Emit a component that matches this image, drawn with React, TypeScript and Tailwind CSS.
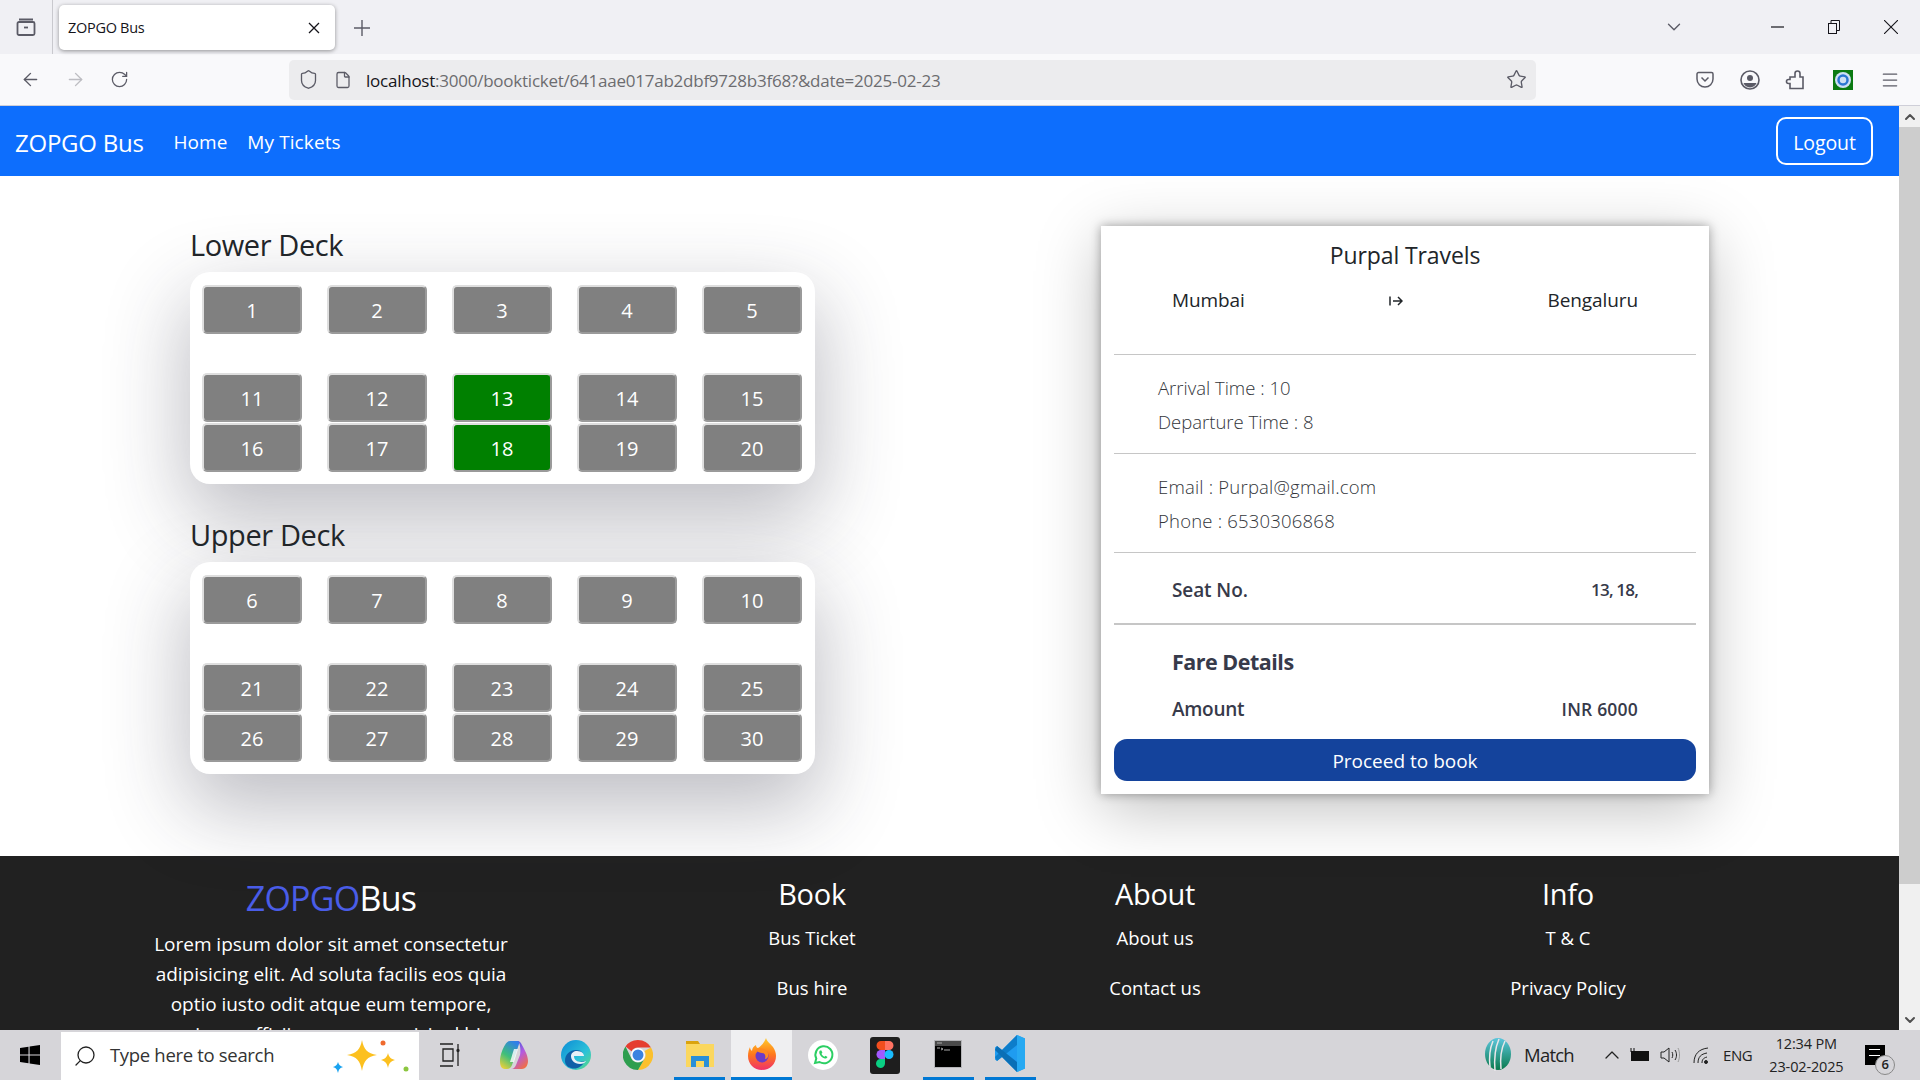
import React from "react";
import { ArrowLeft, ArrowRight, RotateCw, Shield, File, Star, ChevronDown, Menu, ChevronUp, Search } from "lucide-react";

const font = "font-['Open_Sans','Noto_Sans',sans-serif]";

function Seat({ n, on }: { n: number; on?: boolean }) {
  return (
    <button className={`w-[100px] h-[49px] pt-[2px] rounded-[5px] border-2 border-t-[#dedede] border-l-[#dedede] border-r-[#9a9a9a] border-b-[#9a9a9a] text-white text-[20px] flex items-center justify-center ${on ? "bg-[#008000]" : "bg-[#808080]"}`}>
      {n}
    </button>
  );
}

function Deck({ title, rows, on = [], mt }: { title: string; rows: number[][]; on?: number[]; mt: string }) {
  return (
    <div className={mt}>
      <h2 className="text-[29px] leading-[40px] text-[#212529] tracking-[-0.4px] h-[40px]">{title}</h2>
      <div className="mt-[7px] w-[625px] h-[212px] bg-white rounded-[20px] pl-[12px] pr-[13px] pt-[13px] shadow-[0_30px_80px_5px_rgba(40,40,60,0.3)]">
        <div className="flex justify-between">{rows[0].map((n) => <Seat key={n} n={n} on={on.includes(n)} />)}</div>
        <div className="flex justify-between mt-[39px]">{rows[1].map((n) => <Seat key={n} n={n} on={on.includes(n)} />)}</div>
        <div className="flex justify-between mt-[1px]">{rows[2].map((n) => <Seat key={n} n={n} on={on.includes(n)} />)}</div>
      </div>
    </div>
  );
}

function Divider({ thick }: { thick?: boolean }) {
  return <div className={`w-full bg-[#c6c6c6] ${thick ? "h-[2px]" : "h-px"}`} />;
}

function FooterCol({ title, a, b, className }: { title: string; a: string; b: string; className: string }) {
  return (
    <div className={`flex flex-col items-center text-white ${className}`}>
      <div className="text-[29px] leading-[40px] tracking-[-0.3px] mt-[18px]">{title}</div>
      <div className="text-[18.5px] leading-[28px] mt-[10px] tracking-[0px]">{a}</div>
      <div className="text-[18.5px] leading-[28px] mt-[22px] tracking-[0px]">{b}</div>
    </div>
  );
}

function Windows() {
  return (
    <svg width="20" height="20" viewBox="0 0 20 20"><path d="M0 3l8.5-1.3V9.4H0zM9.6 1.500L20 0v9.4H9.6zM0 10.500h8.5v7.8L0 17zM9.6 10.500H20V20L9.6 18.500z" fill="#000" /></svg>
  );
}

function Sparkles() {
  return (
    <svg width="80" height="36" viewBox="0 0 80 36">
      <path d="M31 0c2 10 5 13 15 15-10 2-13 5-15 16-2-11-5-14-15-16 10-2 13-5 15-15z" fill="#fcc01f" />
      <path d="M57 13c1 4 3 6 7 7-4 1-6 3-7 8-1-5-3-7-7-8 4-1 6-3 7-7z" fill="#fcc01f" />
      <circle cx="52" cy="3" r="2.500" fill="#ef6a2e" />
      <circle cx="75" cy="29" r="2.500" fill="#8cc63f" />
      <path d="M7 22c1 3 2 4 5 5-3 1-4 2-5 6-1-4-2-5-5-6 3-1 4-2 5-5z" fill="#1aa3f0" />
    </svg>
  );
}

function Copilot() {
  return (
    <svg width="28" height="30" viewBox="0 0 28 30">
      <defs>
        <linearGradient id="cp1" x1="0.7" y1="0" x2="0.2" y2="1"><stop offset="0" stopColor="#2f7fe8" /><stop offset="0.55" stopColor="#3fbf7a" /><stop offset="1" stopColor="#e8d03a" /></linearGradient>
        <linearGradient id="cp2" x1="0.2" y1="0" x2="0.8" y2="1"><stop offset="0" stopColor="#3a5fe0" /><stop offset="0.5" stopColor="#b45ae0" /><stop offset="1" stopColor="#f5703a" /></linearGradient>
      </defs>
      <path d="M10 1h8c1 0 2 1 1 3l-7 21c-1 3-3 4-5 4H5C1 29 0 25 0 21c0-6 3-13 5-16 1-2 3-4 5-4z" fill="url(#cp1)" />
      <path d="M17 1c3 0 4 2 5 4 2 4 6 10 6 16 0 5-3 8-6 8H11c3 0 4-2 5-4l4-10c1-5 0-14-3-14z" fill="url(#cp2)" />
      <path d="M14 9l4 0-4 13-4 0z" fill="#fff" opacity="0.8" />
    </svg>
  );
}

function Edge() {
  return (
    <svg width="30" height="30" viewBox="0 0 30 30">
      <defs><linearGradient id="ed" x1="0" y1="0" x2="1" y2="1"><stop offset="0" stopColor="#0c8bd6" /><stop offset="0.6" stopColor="#2bc1d8" /><stop offset="1" stopColor="#5fdc7a" /></linearGradient></defs>
      <circle cx="15" cy="15" r="15" fill="url(#ed)" />
      <path d="M4 21c0-7 5-11 11-11 5 0 8 3 7 6h-9c-1 5 4 7 11 5-3 6-9 9-14 7-4-1-6-4-6-7z" fill="#0f5fa8" />
      <path d="M13 16h10c0-2-2-5-7-5-3 0-6 2-6 5 0 4 3 8 9 8 3 0 5-1 6-3-5 2-12 1-12-5z" fill="#fff" opacity="0.9" />
    </svg>
  );
}

function Chrome() {
  return (
    <svg width="30" height="30" viewBox="0 0 30 30">
      <path d="M15 0a15 15 0 0 1 13 7.500H15a7.500 7.500 0 0 0-6.500 3.750L2.500 6.500A15 15 0 0 1 15 0z" fill="#e53d30" />
      <path d="M28 7.500A15 15 0 0 1 15 30l6.500-11.250A7.500 7.500 0 0 0 21.500 11z" fill="#fbc02d" />
      <path d="M2.500 6.500L8.500 18.750A7.500 7.500 0 0 0 21.500 18.750L15 30A15 15 0 0 1 2.500 6.500z" fill="#2e9e4f" />
      <circle cx="15" cy="15" r="7" fill="#fff" /><circle cx="15" cy="15" r="5.500" fill="#3b82e0" />
    </svg>
  );
}

function Explorer() {
  return (
    <svg width="28" height="28" viewBox="0 0 28 28">
      <path d="M0 1h12l2 3v3H0z" fill="#dba30d" />
      <rect y="4" width="28" height="23" fill="#fbd75e" />
      <path d="M5 27V16h18v11h-5v-6h-8v6z" fill="#2a8fd8" />
    </svg>
  );
}

function Firefox() {
  return (
    <svg width="28" height="32" viewBox="0 0 28 32">
      <defs><linearGradient id="ff" x1="0.5" y1="0" x2="0.5" y2="1"><stop offset="0" stopColor="#ffcb2e" /><stop offset="0.5" stopColor="#ff7a1a" /><stop offset="1" stopColor="#f0306a" /></linearGradient></defs>
      <path d="M18 0c1 4 4 5 7 9 2 3 3 6 3 9 0 8-6 14-14 14S0 26 0 18c0-4 1-7 2-9 0 2 1 3 2 4 0-3 2-5 4-6 0 2 1 3 2 3 3-2 6-5 8-10z" fill="url(#ff)" />
      <circle cx="14" cy="18" r="6.500" fill="#6b3bc7" />
      <path d="M7 12c4-3 11-2 13 3 1 4-1 6-3 6 1-3 0-6-3-6-2 0-4-1-7-3z" fill="#ff8a1f" />
    </svg>
  );
}

function WhatsApp() {
  return (
    <svg width="30" height="30" viewBox="0 0 30 30">
      <circle cx="15" cy="15" r="15" fill="#fff" />
      <path d="M7 23l1.300-4.500A8.500 8.500 0 1 1 11.500 22z" fill="none" stroke="#2bcf63" strokeWidth="2" />
      <path d="M12 10.500c-1 1-1 2.500 0 4.200 1.200 2 3 3.400 4.800 3.800 1.400.2 2.400-.5 2.700-1.500l-2-1.200-1 1c-1.300-.5-2.500-1.700-3-3l.9-1-1-2.300z" fill="#2bcf63" />
    </svg>
  );
}

function Figma() {
  return (
    <svg width="30" height="37" viewBox="0 0 30 37">
      <rect width="30" height="37" rx="3" fill="#1e1e1e" />
      <path d="M15 4h-4a4.500 4.500 0 0 0 0 9h4z" fill="#f24e1e" />
      <path d="M15 4h4a4.500 4.500 0 0 1 0 9h-4z" fill="#ff7262" />
      <path d="M15 13h-4a4.500 4.500 0 0 0 0 9h4z" fill="#a259ff" />
      <circle cx="19" cy="17.500" r="4.500" fill="#1abcfe" />
      <path d="M11 22h4v4.500a4.500 4.500 0 1 1-4-4.500z" fill="#0acf83" />
    </svg>
  );
}

function Terminal() {
  return (
    <svg width="28" height="28" viewBox="0 0 28 28">
      <rect width="28" height="28" fill="#b5b5b8" />
      <rect x="1" y="1" width="26" height="5" fill="#4a4a4a" />
      <rect x="1" y="6" width="26" height="21" fill="#000" />
      <path d="M3 3h5M3 8h3M7 8l2 1-2 1M10 10h6" stroke="#aaa" strokeWidth="1" fill="none" />
    </svg>
  );
}

function VSCode() {
  return (
    <svg width="30" height="37" viewBox="0 0 30 37">
      <path d="M22 0l8 3.500v30L22 37 7 22 2 26l-2-1.500v-12L2 11l5 4z" fill="#1f9cf0" />
      <path d="M22 0L0 22l2 4 20-16z" fill="#0b7ac5" opacity="0.9" />
      <path d="M22 37L0 15l2-4 20 16z" fill="#0a6fb6" />
      <path d="M22 0l8 3.500v30L22 37z" fill="#27a9f2" />
    </svg>
  );
}

function Cricket() {
  return (
    <svg width="26" height="34" viewBox="0 0 26 34">
      <defs><linearGradient id="cr" x1="0" y1="0" x2="0" y2="1"><stop offset="0" stopColor="#5cc6dd" /><stop offset="1" stopColor="#0a7a4d" /></linearGradient></defs>
      <ellipse cx="13" cy="16" rx="13" ry="16" fill="url(#cr)" />
      <path d="M8 3C5 10 4 20 5 29M14 1c-4 9-5 20-4 32M20 3c-4 8-5 18-4 28" stroke="#e9e7ea" strokeWidth="1.500" fill="none" />
    </svg>
  );
}

export default function App() {
  return (
    <div className={`h-screen w-full overflow-hidden flex flex-col bg-white ${font}`}>
      {/* Tab strip */}
      <div className="h-[54px] shrink-0 bg-[#f0f0f4] flex items-center relative">
        <div className="w-[53px] h-full border-r border-r-[#c9c9ce] flex items-center justify-center text-[#5b5b66]">
          <svg width="20" height="20" viewBox="0 0 20 20" fill="none" stroke="currentColor" strokeWidth="1.800"><path d="M3 2.500h14M1.500 6.500a1.500 1.500 0 0 1 1.500-1.500h14a1.500 1.500 0 0 1 1.500 1.500v10a1.500 1.500 0 0 1-1.500 1.500H3a1.500 1.500 0 0 1-1.500-1.500z" /><path d="M8 10.500h4" /></svg>
        </div>
        <div className="ml-[6px] mt-[1px] w-[276px] h-[45px] bg-white rounded-[5px] shadow-[0_1px_4px_rgba(0,0,0,0.4)] flex items-center justify-between pl-[9px] pr-[15px]">
          <span className="text-[14.500px] tracking-[-0.3px] text-[#15141a]">ZOPGO Bus</span>
          <svg width="12" height="12" viewBox="0 0 12 12" stroke="#15141a" strokeWidth="1.300"><path d="M1 1l10 10M11 1L1 11" /></svg>
        </div>
        <svg width="16" height="16" viewBox="0 0 16 16" stroke="#5b5b66" strokeWidth="1.400" className="ml-[19px] mt-[2px]"><path d="M8 0v16M0 8h16" /></svg>
        <ChevronDown size={22} strokeWidth={1.500} className="ml-auto text-[#5b5b66] mr-[-7px]" />
        <svg width="13" height="2" viewBox="0 0 13 2" stroke="#15141a" strokeWidth="1.200" className="ml-[93px] mb-[1px]"><path d="M0 1h13" /></svg>
        <svg width="12" height="14" viewBox="0 0 12 14" fill="none" stroke="#15141a" className="ml-[44px] mb-[1px]"><rect x="0.500" y="3.500" width="8" height="10" /><path d="M3 3V.500h8.500v10H9" /></svg>
        <svg width="14" height="14" viewBox="0 0 14 14" stroke="#15141a" strokeWidth="1.100" className="ml-[44px] mr-[22px] mb-[1px]"><path d="M0 0l14 14M14 0L0 14" /></svg>
      </div>
      {/* Toolbar */}
      <div className="h-[52px] shrink-0 bg-[#f9f9fb] border-b border-b-[#cfcfd8] flex items-center">
        <ArrowLeft size={21} strokeWidth={1.600} className="ml-[20px] text-[#5b5b66]" />
        <ArrowRight size={21} strokeWidth={1.600} className="ml-[24px] text-[#bdbdc2]" />
        <RotateCw size={19} strokeWidth={1.600} className="ml-[24px] text-[#5b5b66]" />
        <div className="ml-[160px] w-[1247px] h-[40px] bg-[#ececee] rounded-[5px] flex items-center pl-[9px] pr-[9px]">
          <Shield size={21} strokeWidth={1.500} className="text-[#5b5b66]" />
          <File size={18} strokeWidth={1.700} className="ml-[15px] text-[#5b5b66]" />
          <span className="ml-[14px] pt-[2px] text-[17px] tracking-[-0.24px] text-[#6c6c70]"><span className="text-[#15141a]">localhost</span>:3000/bookticket/641aae017ab2dbf9728b3f68?&amp;date=2025-02-23</span>
          <Star size={21} strokeWidth={1.500} className="ml-auto text-[#5b5b66]" />
        </div>
        <svg width="18" height="18" viewBox="0 0 18 18" fill="none" stroke="#5b5b66" strokeWidth="1.500" className="ml-[160px]"><path d="M2.500 1.500h13a1.500 1.500 0 0 1 1.500 1.500v5a8 8 0 0 1-16 0V3a1.500 1.500 0 0 1 1.500-1.500z" /><path d="M5.500 6.500L9 10l3.500-3.500" /></svg>
        <svg width="20" height="20" viewBox="0 0 20 20" fill="none" className="ml-[26px]"><circle cx="10" cy="10" r="9" stroke="#5b5b66" strokeWidth="1.600" /><circle cx="10" cy="8" r="3" fill="#5b5b66" /><path d="M3.500 13h13a7 7 0 0 1-13 0z" fill="#5b5b66" /></svg>
        <svg width="20" height="20" viewBox="0 0 20 20" fill="none" stroke="#5b5b66" strokeWidth="1.600" className="ml-[25px]"><path d="M5 7h5V3.500a2.500 2.500 0 0 1 5 0V7h3v11.500H5v-5H3.500a2 2 0 0 1 0-4H5z" /></svg>
        <svg width="20" height="20" viewBox="0 0 20 20" className="ml-[28px]"><rect width="20" height="24" y="-2" fill="#0b7a12" /><circle cx="10" cy="10" r="8" fill="#cfe0f5" /><circle cx="10" cy="10" r="4.500" fill="none" stroke="#2b76d2" strokeWidth="2.500" /></svg>
        <Menu size={20} strokeWidth={1.500} className="ml-[27px] text-[#5b5b66]" />
      </div>

      <div className="flex-1 min-h-0 flex">
        <div className="w-[1899px] flex flex-col min-h-0">
          {/* Navbar */}
          <div className="h-[70px] shrink-0 bg-[#0d6efd] flex items-center text-white pl-[15px] pr-[26px]">
            <span className="text-[24px] tracking-[-0.25px] mr-[30px] pt-[3px]">ZOPGO Bus</span>
            <span className="text-[19px] tracking-[0px] mr-[20px] pt-[3px]">Home</span>
            <span className="text-[19px] tracking-[0.1px] pt-[3px]">My Tickets</span>
            <button className="ml-auto w-[97px] h-[48px] pt-[3px] rounded-[10px] border-2 border-white text-[19.500px] tracking-[-0.1px] flex items-center justify-center">Logout</button>
          </div>
          {/* Main */}
          <div className="h-[680px] shrink-0 flex pl-[190px] relative">
            <div className="w-[625px]">
              <Deck title="Lower Deck" mt="mt-[49px]" on={[13, 18]} rows={[[1, 2, 3, 4, 5], [11, 12, 13, 14, 15], [16, 17, 18, 19, 20]]} />
              <Deck title="Upper Deck" mt="mt-[31px]" rows={[[6, 7, 8, 9, 10], [21, 22, 23, 24, 25], [26, 27, 28, 29, 30]]} />
            </div>
            <div className="ml-[286px] mt-[50px] w-[608px] h-[568px] bg-white px-[13px] shadow-[0_0_10px_rgba(0,0,0,0.35),0_15px_60px_rgba(0,0,0,0.25)]">
              <div className="text-[23px] leading-[32px] text-center text-[#212529] tracking-[-0.1px] pt-[13px] h-[45px]">Purpal Travels</div>
              <div className="h-[83px] px-[58px] pt-[15px] flex justify-between text-[19px] leading-[28px] text-[#212529] tracking-[-0.1px] relative">
                <span>Mumbai</span>
                <svg width="14" height="12" viewBox="0 0 14 12" fill="none" stroke="#212529" strokeWidth="1.500" className="mt-[9px]"><path d="M1 1.500v9M4 6h9M9 2l4 4-4 4" /></svg>
                <span>Bengaluru</span>
              </div>
              <Divider />
              <div className="h-[98px] pl-[44px] pt-[16px] text-[18.500px] leading-[34px] text-[#33363b] font-light tracking-[0px]">
                <div>Arrival Time : 10</div>
                <div>Departure Time : 8</div>
              </div>
              <Divider />
              <div className="h-[98px] pl-[44px] pt-[16px] text-[18.500px] leading-[34px] text-[#33363b] font-light tracking-[0.2px]">
                <div>Email : Purpal@gmail.com</div>
                <div>Phone : 6530306868</div>
              </div>
              <Divider />
              <div className="h-[70px] px-[58px] pt-[4px] flex justify-between items-center text-[#373a4a] font-semibold">
                <span className="text-[19px] tracking-[-0.1px]">Seat No.</span>
                <span className="text-[17px] tracking-[-0.8px]">13, 18,</span>
              </div>
              <Divider thick />
              <div className="h-[114px] px-[58px] pt-[22px] text-[#373a4a] font-bold">
                <div className="text-[21.500px] leading-[30px] tracking-[-0.5px]">Fare Details</div>
                <div className="flex justify-between items-center mt-[18px] leading-[28px] font-semibold">
                  <span className="text-[19px] tracking-[-0.3px]">Amount</span>
                  <span className="text-[17.500px] tracking-[0.2px]">INR 6000</span>
                </div>
              </div>
              <button className="w-full h-[42px] pt-[2px] rounded-[13px] bg-[#14439c] text-white text-[19px] tracking-[0px]">Proceed to book</button>
            </div>
          </div>
          {/* Footer */}
          <div className="flex-1 min-h-0 overflow-hidden bg-[#212121] flex">
            <div className="w-[360px] ml-[151px] shrink-0 text-center text-white">
              <div className="text-[34px] leading-[46px] mt-[19px] tracking-[-0.75px]"><span className="text-[#4a5de8]">ZOPGO</span>Bus</div>
              <p className="text-[19px] leading-[30px] mt-[8px] tracking-[-0.03px]">
                Lorem ipsum dolor sit amet consectetur adipisicing elit. Ad soluta facilis eos quia optio iusto odit atque eum tempore, maiores officiis numquam nisi ad hic.
              </p>
            </div>
            <FooterCol title="Book" a="Bus Ticket" b="Bus hire" className="w-[200px] ml-[201px]" />
            <FooterCol title="About" a="About us" b="Contact us" className="w-[200px] ml-[143px]" />
            <FooterCol title="Info" a="T & C" b="Privacy Policy" className="w-[200px] ml-[213px]" />
          </div>
        </div>
        {/* Scrollbar */}
        <div className="w-[21px] bg-[#f0f0f0] flex flex-col">
          <div className="h-[21px] flex items-center justify-center"><ChevronUp size={16} strokeWidth={3} className="text-[#505050]" /></div>
          <div className="h-[757px] bg-[#cdcdcd]" />
          <div className="mt-auto h-[20px] flex items-center justify-center"><ChevronDown size={16} strokeWidth={3} className="text-[#505050]" /></div>
        </div>
      </div>

      {/* Taskbar */}
      <div className="h-[50px] shrink-0 bg-[#d6d5d9] flex items-center">
        <div className="ml-[20px] w-[20px] flex"><Windows /></div>
        <div className="ml-[21px] w-[358px] h-[48px] mt-[1px] bg-white flex items-center pl-[12px] relative">
          <Search size={24} strokeWidth={1.300} className="-scale-x-100 text-[#222]" />
          <span className="ml-[13px] -mt-[1px] text-[18.500px] tracking-[-0.32px] text-[#333]">Type here to search</span>
          <div className="absolute left-[270px] top-[8px]"><Sparkles /></div>
        </div>
        <svg width="20" height="24" viewBox="0 0 20 24" fill="none" stroke="#222" strokeWidth="1.300" className="ml-[21px]"><path d="M0 1h13M3 6h10v12H3zM0 23h13M18 1v5M18 9v14" /><circle cx="18" cy="7.500" r="1" fill="#222" /></svg>
        <div className="ml-[40px]"><Copilot /></div>
        <div className="ml-[33px]"><Edge /></div>
        <div className="ml-[32px]"><Chrome /></div>
        <div className="ml-[21px] w-[51px] h-full flex items-center justify-center border-b-[3px] border-b-[#0078d4]"><Explorer /></div>
        <div className="ml-[6px] w-[61px] h-full bg-[#efeff1] flex items-center justify-center border-b-[3px] border-b-[#0078d4]"><Firefox /></div>
        <div className="ml-[16px]"><WhatsApp /></div>
        <div className="ml-[32px]"><Figma /></div>
        <div className="ml-[23px] w-[51px] h-full flex items-center justify-center border-b-[3px] border-b-[#0078d4] pr-[2px]"><Terminal /></div>
        <div className="ml-[11px] w-[51px] h-full flex items-center justify-center border-b-[3px] border-b-[#0078d4] pr-[2px]"><VSCode /></div>
        <div className="ml-[449px]"><Cricket /></div>
        <span className="ml-[13px] text-[18.500px] tracking-[-0.75px] text-[#222]">Match</span>
        <ChevronUp size={24} strokeWidth={1.300} className="ml-[26px] text-[#222]" />
        <svg width="20" height="14" viewBox="0 0 20 14" className="ml-[5px]"><rect x="2" y="3" width="18" height="10" fill="#111" /><path d="M2 0v4M5 0v4" stroke="#111" /></svg>
        <svg width="20" height="18" viewBox="0 0 20 18" fill="none" stroke="#222" className="ml-[11px]"><path d="M1 6h3l5-4v14l-5-4H1zM12 6c1 2 1 4 0 6M15 4c2 3 2 7 0 10" /><path d="M18 2c2 4 2 10 0 14" stroke="#999" /></svg>
        <svg width="16" height="18" viewBox="0 0 16 18" fill="none" stroke="#222" className="ml-[13px]"><path d="M1 17c0-9 5-14 14-15M5 17c0-6 3-9 9-10" /><path d="M9 17c0-3 1-5 5-6" /><circle cx="13" cy="16" r="1.500" fill="#222" /></svg>
        <span className="ml-[14px] text-[15px] tracking-[-0.4px] text-[#222]">ENG</span>
        <div className="ml-[17px] w-[74px] text-center text-[14.500px] leading-[23px] tracking-[-0.15px] text-[#222]"><div>12:34 PM</div><div className="whitespace-nowrap">23-02-2025</div></div>
        <div className="ml-[22px] relative w-[20px] h-[20px] bg-black">
          <div className="absolute left-[4px] top-[4px] w-[11px] h-[7px] border-y border-y-white" />
          <div className="absolute -right-[10px] top-[10px] w-[20px] h-[20px] rounded-full bg-[#d6d5d9] border border-[#888] text-[13px] font-semibold flex items-center justify-center text-[#222]">6</div>
        </div>
      </div>
    </div>
  );
}
